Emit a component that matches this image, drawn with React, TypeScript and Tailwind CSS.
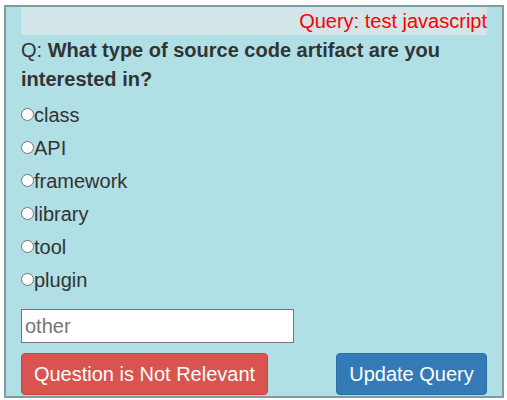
import React from "react";

export default function App() {
  const opts = ["class", "API", "framework", "library", "tool", "plugin"];
  return (
    <div className="pl-[4px] pt-[5px]" style={{ fontFamily: '"Liberation Sans", Arial, sans-serif' }}>
      <div className="w-[500px] h-[393px] border-2 border-[#7c9ea3] bg-[#b0dfe5] px-[15px] text-[#333]">
        <div className="h-[28px] bg-[#d2e5e9] text-right text-[20px] leading-[28px] text-[#ff0000]">Query: test javascript</div>
        <div className="mt-[1px] text-[20px] leading-[29px]">
          Q: <b>What type of source code artifact are you interested in?</b>
        </div>
        <div className="mt-[4px] flex flex-col">
          {opts.map((o) => (
            <label key={o} className="flex h-[33px] items-center text-[20px]">
              <span className="inline-block h-[13px] w-[13px] rounded-full border border-[#767676] bg-white" />
              <span className="leading-[22px]">{o}</span>
            </label>
          ))}
        </div>
        <input
          placeholder="other"
          className="mt-[13px] block h-[34px] w-[273px] border border-[#767676] bg-white px-[3px] text-[20px] placeholder-[#757575] outline-none"
        />
        <div className="mt-[10px] flex justify-between">
          <button className="h-[42px] w-[247px] rounded-[4px] border border-[#d43f3a] bg-[#d9534f] text-[20px] text-white">
            Question is Not Relevant
          </button>
          <button className="h-[42px] w-[151px] rounded-[4px] border border-[#2e6da4] bg-[#337ab7] text-[20px] text-white">
            Update Query
          </button>
        </div>
      </div>
    </div>
  );
}
